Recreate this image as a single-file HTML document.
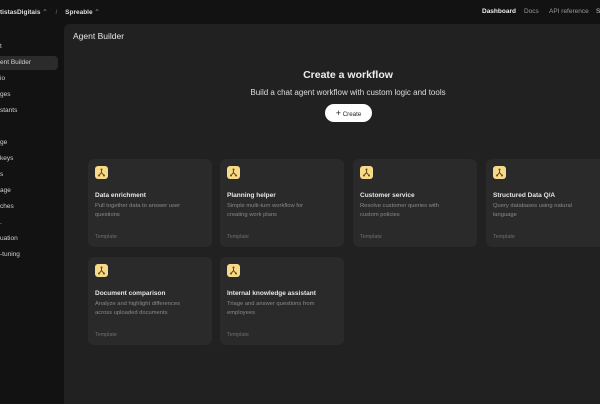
<!DOCTYPE html><html><head><style>
*{margin:0;padding:0;box-sizing:border-box}
body{width:600px;height:400px;overflow:hidden;background:#121212;font-family:"Liberation Sans",sans-serif;color:#e8e8e8;position:relative}
.t{position:absolute;white-space:nowrap}
.side{font-size:6.5px;color:#d0d0d0}
.main{position:absolute;left:64px;top:24px;width:540px;height:380px;background:#212121;border-radius:6px 0 0 0}
.card{position:absolute;width:124px;height:88px;background:#2a2a2a;border-radius:6px}
.ic{position:absolute;left:7px;top:7px;width:13px;height:13px;background:#f7d98a;border-radius:3px}
.ct{position:absolute;left:7px;top:33px;font-size:6.5px;color:#e6e6e6;font-weight:bold;white-space:nowrap}
.cd{position:absolute;left:7px;top:43px;font-size:5.8px;color:#8a8a8a;line-height:9.3px;width:98px}
.cf{position:absolute;left:7px;top:75px;font-size:5.4px;color:#6f6f6f}
</style></head><body>
<div class="t" style="left:0;top:8px;font-size:6.5px;font-weight:bold;color:#ddd">tistasDigitais <span style="color:#777">⌃</span> <span style="color:#555;margin:0 6px">/</span> Spreable <span style="color:#777">⌃</span></div>
<div class="t" style="left:482px;top:8px;font-size:6.5px;font-weight:bold;color:#eee">Dashboard</div>
<div class="t" style="left:524px;top:8px;font-size:6.5px;color:#999">Docs</div>
<div class="t" style="left:549px;top:8px;font-size:6.5px;color:#999">API reference</div>
<div class="t" style="left:596px;top:8px;font-size:6.5px;color:#ccc">S</div>
<div style="position:absolute;left:0;top:56px;width:58px;height:14px;background:#2b2b2b;border-radius:0 4px 4px 0"></div>
<div class="t side" style="left:0;top:43px">t</div>
<div class="t side" style="left:0;top:59px">ent Builder</div>
<div class="t side" style="left:0;top:75px">io</div>
<div class="t side" style="left:0;top:91px">ges</div>
<div class="t side" style="left:0;top:107px">stants</div>
<div class="t side" style="left:0;top:139px">ge</div>
<div class="t side" style="left:0;top:155px">keys</div>
<div class="t side" style="left:0;top:171px">s</div>
<div class="t side" style="left:0;top:187px">age</div>
<div class="t side" style="left:0;top:203px">ches</div>
<div class="t side" style="left:0;top:219px">.</div>
<div class="t side" style="left:0;top:235px">uation</div>
<div class="t side" style="left:0;top:251px">-tuning</div>
<div class="main"></div>
<div class="t" style="left:73px;top:31px;font-size:8.5px;color:#e6e6e6">Agent Builder</div>
<div class="t" style="left:0;width:696px;text-align:center;top:69px;font-size:10.5px;font-weight:bold;color:#eee">Create a workflow</div>
<div class="t" style="left:0;width:696px;text-align:center;top:88px;font-size:8px;color:#ddd">Build a chat agent workflow with custom logic and tools</div>
<div style="position:absolute;left:325px;top:104px;width:47px;height:18px;background:#fff;border-radius:9px;color:#222;font-size:6.2px;line-height:18px;text-align:center"><b style="font-size:9px;font-weight:normal">+</b> Create</div>
<svg width="0" height="0" style="position:absolute"><defs><g id="g"><path d="M6.5 3.5v3M4 9.5l2.5-3 2.5 3" stroke="#6a4a10" stroke-width="1" fill="none"/><circle cx="6.5" cy="3.5" r="1" fill="#6a4a10"/><circle cx="4" cy="9.5" r="1" fill="#6a4a10"/><circle cx="9" cy="9.5" r="1" fill="#6a4a10"/></g></defs></svg>
<div class="card" style="left:88px;top:159px"><svg class="ic" viewBox="0 0 13 13"><use href="#g"/></svg><div class="ct">Data enrichment</div><div class="cd">Pull together data to answer user questions</div><div class="cf">Template</div></div>
<div class="card" style="left:220px;top:159px"><svg class="ic" viewBox="0 0 13 13"><use href="#g"/></svg><div class="ct">Planning helper</div><div class="cd">Simple multi-turn workflow for creating work plans</div><div class="cf">Template</div></div>
<div class="card" style="left:353px;top:159px"><svg class="ic" viewBox="0 0 13 13"><use href="#g"/></svg><div class="ct">Customer service</div><div class="cd">Resolve customer queries with custom policies</div><div class="cf">Template</div></div>
<div class="card" style="left:486px;top:159px"><svg class="ic" viewBox="0 0 13 13"><use href="#g"/></svg><div class="ct">Structured Data Q/A</div><div class="cd">Query databases using natural language</div><div class="cf">Template</div></div>
<div class="card" style="left:88px;top:257px"><svg class="ic" viewBox="0 0 13 13"><use href="#g"/></svg><div class="ct">Document comparison</div><div class="cd">Analyze and highlight differences across uploaded documents</div><div class="cf">Template</div></div>
<div class="card" style="left:220px;top:257px"><svg class="ic" viewBox="0 0 13 13"><use href="#g"/></svg><div class="ct">Internal knowledge assistant</div><div class="cd">Triage and answer questions from employees</div><div class="cf">Template</div></div>
</body></html>
